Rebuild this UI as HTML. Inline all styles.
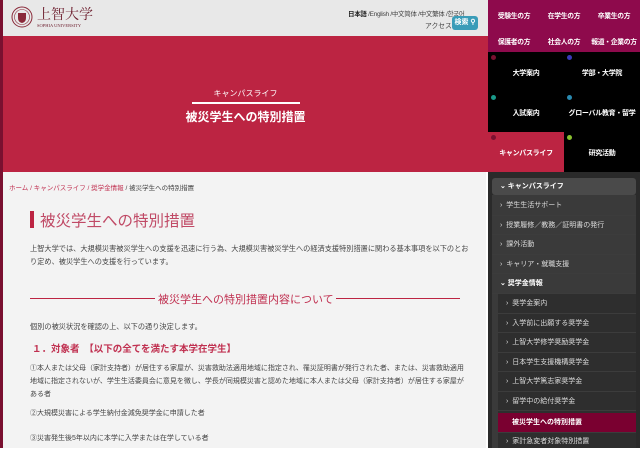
<!DOCTYPE html>
<html><head><meta charset="utf-8"><style>
*{margin:0;padding:0;box-sizing:border-box}
body{width:640px;height:474px;background:#fff;font-family:"Liberation Sans","Noto Sans CJK JP",sans-serif;position:relative;overflow:hidden}
.a{position:absolute}
.top{left:0;top:0;width:488px;height:36px;background:#e8e8e8}
.strip{left:0;top:0;width:3px;height:448px;background:#7a1030}
.hero{left:3px;top:36px;width:485px;height:136px;background:#bc2442;color:#fff;text-align:center}
.mag{left:488px;top:0;width:152px;height:52px;background:#8e0a4c}
.mag span{position:absolute;color:#fff;font-size:6.8px;font-weight:bold;width:52px;text-align:center;white-space:nowrap;letter-spacing:-.3px}
.blk{left:488px;top:52px;width:152px;height:120px;background:#000}
.cell{position:absolute;width:76px;height:40px;color:#fff;font-size:7px;font-weight:bold;text-align:center;padding-top:16px;white-space:nowrap;letter-spacing:-.3px}
.dot{position:absolute;left:3px;top:3px;width:5px;height:5px;border-radius:50%}
.main{left:3px;top:172px;width:483px;height:276px;background:#f3f3f3}
.side{left:488px;top:172px;width:152px;height:276px;background:#2a2a2a}
.si{position:absolute;left:492px;width:144px;height:19.5px;font-size:7px;color:#ddd;padding-left:8px;line-height:19.5px;border-bottom:1px solid #3c3c3c}
.p{font-size:7.2px;color:#444;line-height:13px}
</style></head><body>
<div class="a top"></div>
<div class="a strip"></div>
<svg class="a" style="left:11px;top:6px" width="22" height="22" viewBox="0 0 22 22"><circle cx="11" cy="11" r="10" fill="none" stroke="#8a2a3a" stroke-width="1"/><circle cx="11" cy="11" r="7.5" fill="none" stroke="#8a2a3a" stroke-width=".6"/><path d="M7 7h8v5q0 4-4 5q-4-1-4-5z" fill="#8a2a3a"/></svg>
<div class="a" style="left:37px;top:6px;font-family:'Noto Serif CJK SC',serif;font-size:14px;color:#6a1a2a;line-height:16px">上智大学</div>
<div class="a" style="left:37px;top:23px;font-family:'Liberation Serif',serif;font-size:4.5px;color:#6a1a2a">SOPHIA UNIVERSITY</div>
<div class="a" style="left:348px;top:8px;font-size:6.5px;color:#444;letter-spacing:-.3px;white-space:nowrap"><b style="color:#222">日本語</b> /English /中文简体 /中文繁体 /한국어</div>
<div class="a" style="left:425px;top:20px;font-size:6.8px;color:#444">アクセス</div>
<div class="a" style="left:452px;top:16px;width:26px;height:14px;background:#3a9cb8;border-radius:3px;color:#fff;font-size:7px;font-weight:bold;text-align:center;line-height:14px">検索 ⚲</div>
<div class="a hero"><div style="margin-top:52px;font-size:8px">キャンパスライフ</div><div style="width:108px;height:2px;background:#fff;margin:3px auto 4px"></div><div style="font-size:12px;font-weight:bold">被災学生への特別措置</div></div>
<div class="a mag"><span style="left:0;top:10px">受験生の方</span><span style="left:50px;top:10px">在学生の方</span><span style="left:100px;top:10px">卒業生の方</span><span style="left:0;top:36px">保護者の方</span><span style="left:50px;top:36px">社会人の方</span><span style="left:100px;top:36px">報道・企業の方</span></div>
<div class="a blk">
<div class="cell" style="left:0;top:0"><i class="dot" style="background:#7a1030"></i>大学案内</div>
<div class="cell" style="left:76px;top:0"><i class="dot" style="background:#3a3ab8"></i>学部・大学院</div>
<div class="cell" style="left:0;top:40px"><i class="dot" style="background:#1a9a8a"></i>入試案内</div>
<div class="cell" style="left:76px;top:40px"><i class="dot" style="background:#2a8ab0"></i>グローバル教育・留学</div>
<div class="cell" style="left:0;top:80px;background:#bc2442"><i class="dot" style="background:#7a1030"></i>キャンパスライフ</div>
<div class="cell" style="left:76px;top:80px"><i class="dot" style="background:#8ac030"></i>研究活動</div>
</div>
<div class="a main"></div>
<div class="a" style="left:9px;top:182px;font-size:6.5px;color:#c03050">ホーム / キャンパスライフ / 奨学金情報 <span style="color:#444">/ 被災学生への特別措置</span></div>
<div class="a" style="left:30px;top:211px;width:4px;height:17px;background:#bc2442"></div>
<div class="a" style="left:40px;top:209px;font-size:15.5px;color:#c04a66">被災学生への特別措置</div>
<div class="a p" style="left:30px;top:242px;width:440px">上智大学では、大規模災害被災学生への支援を迅速に行う為、大規模災害被災学生への経済支援特別措置に関わる基本事項を以下のとおり定め、被災学生への支援を行っています。</div>
<div class="a" style="left:30px;top:298px;width:125px;height:1px;background:#bc2442"></div>
<div class="a" style="left:336px;top:298px;width:124px;height:1px;background:#bc2442"></div>
<div class="a" style="left:158px;top:291px;font-size:11px;color:#c03050">被災学生への特別措置内容について</div>
<div class="a p" style="left:30px;top:320px">個別の被災状況を確認の上、以下の通り決定します。</div>
<div class="a" style="left:32px;top:341px;font-size:9.5px;font-weight:bold;color:#c03050">１．対象者　【以下の全てを満たす本学在学生】</div>
<div class="a p" style="left:30px;top:362px;width:440px;font-size:7px">①本人または父母（家計支持者）が居住する家屋が、災害救助法適用地域に指定され、罹災証明書が発行された者、または、災害救助適用地域に指定されないが、学生生活委員会に意見を徴し、学長が同規模災害と認めた地域に本人または父母（家計支持者）が居住する家屋がある者</div>
<div class="a p" style="left:30px;top:407px;font-size:7px">②大規模災害による学生納付金減免奨学金に申請した者</div>
<div class="a p" style="left:30px;top:432px;font-size:7px">③災害発生後5年以内に本学に入学または在学している者</div>
<div class="a side"></div>
<div class="a" style="left:492px;top:178px;width:144px;height:17px;background:#4a4a4a;border-radius:3px;color:#fff;font-size:7px;font-weight:bold;line-height:17px;padding-left:8px">⌄ キャンパスライフ</div>
<div class="a" style="left:492px;top:195px;width:144px;height:253px;background:#3a3a3a"></div>
<div class="a" style="left:498px;top:294px;width:138px;height:154px;background:#2e2e2e"></div>
<div class="si" style="top:196px">›&nbsp; 学生生活サポート</div>
<div class="si" style="top:215.5px">›&nbsp; 授業履修／教務／証明書の発行</div>
<div class="si" style="top:235px">›&nbsp; 課外活動</div>
<div class="si" style="top:254.5px">›&nbsp; キャリア・就職支援</div>
<div class="si" style="top:274px;font-weight:bold;color:#fff">⌄ 奨学金情報</div>
<div class="si" style="top:294px;left:498px;width:138px">›&nbsp; 奨学金案内</div>
<div class="si" style="top:313.5px;left:498px;width:138px">›&nbsp; 入学前に出願する奨学金</div>
<div class="si" style="top:333px;left:498px;width:138px">›&nbsp; 上智大学修学奨励奨学金</div>
<div class="si" style="top:352.5px;left:498px;width:138px">›&nbsp; 日本学生支援機構奨学金</div>
<div class="si" style="top:372px;left:498px;width:138px">›&nbsp; 上智大学篤志家奨学金</div>
<div class="si" style="top:391.5px;left:498px;width:138px">›&nbsp; 留学中の給付奨学金</div>
<div class="si" style="top:413px;left:498px;width:138px;background:#7a0030;color:#fff;font-weight:bold;padding-left:14px">被災学生への特別措置</div>
<div class="si" style="top:434px;left:498px;width:138px;height:14px;line-height:16px;border:0">›&nbsp; 家計急変者対象特別措置</div>
</body></html>
